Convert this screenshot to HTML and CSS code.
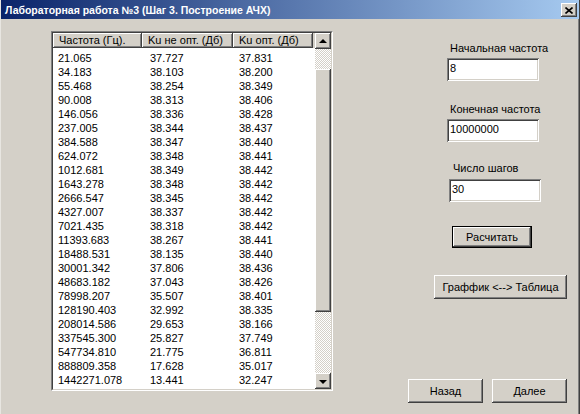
FILE: index.html
```html
<!DOCTYPE html>
<html>
<head>
<meta charset="utf-8">
<link rel="stylesheet" href="styles.css">
</head>
<body>
<div class="window">
  <div class="titlebar">
    <span class="title">Лабораторная работа №3 (Шаг 3. Построение АЧХ)</span>
    <span class="close"><svg width="8" height="7" viewBox="0 0 8 7"><path d="M0.5 0.5 L7.5 6.5 M7.5 0.5 L0.5 6.5" stroke="#000" stroke-width="1.6"/></svg></span>
  </div>
  <div class="client">
    <div class="listbox">
      <div class="listbox-inner">
        <div class="list-main">
          <div class="header">
            <div class="hcell c1">Частота (Гц).</div>
            <div class="hcell c2">Ku не опт. (Дб)</div>
            <div class="hcell c3">Ku опт. (Дб)</div>
          </div>
          <div class="rows">
            <div class="row"><span>21.065</span><span>37.727</span><span>37.831</span></div>
            <div class="row"><span>34.183</span><span>38.103</span><span>38.200</span></div>
            <div class="row"><span>55.468</span><span>38.254</span><span>38.349</span></div>
            <div class="row"><span>90.008</span><span>38.313</span><span>38.406</span></div>
            <div class="row"><span>146.056</span><span>38.336</span><span>38.428</span></div>
            <div class="row"><span>237.005</span><span>38.344</span><span>38.437</span></div>
            <div class="row"><span>384.588</span><span>38.347</span><span>38.440</span></div>
            <div class="row"><span>624.072</span><span>38.348</span><span>38.441</span></div>
            <div class="row"><span>1012.681</span><span>38.349</span><span>38.442</span></div>
            <div class="row"><span>1643.278</span><span>38.348</span><span>38.442</span></div>
            <div class="row"><span>2666.547</span><span>38.345</span><span>38.442</span></div>
            <div class="row"><span>4327.007</span><span>38.337</span><span>38.442</span></div>
            <div class="row"><span>7021.435</span><span>38.318</span><span>38.442</span></div>
            <div class="row"><span>11393.683</span><span>38.267</span><span>38.441</span></div>
            <div class="row"><span>18488.531</span><span>38.135</span><span>38.440</span></div>
            <div class="row"><span>30001.342</span><span>37.806</span><span>38.436</span></div>
            <div class="row"><span>48683.182</span><span>37.043</span><span>38.426</span></div>
            <div class="row"><span>78998.207</span><span>35.507</span><span>38.401</span></div>
            <div class="row"><span>128190.403</span><span>32.992</span><span>38.335</span></div>
            <div class="row"><span>208014.586</span><span>29.653</span><span>38.166</span></div>
            <div class="row"><span>337545.300</span><span>25.827</span><span>37.749</span></div>
            <div class="row"><span>547734.810</span><span>21.775</span><span>36.811</span></div>
            <div class="row"><span>888809.358</span><span>17.628</span><span>35.017</span></div>
            <div class="row"><span>1442271.078</span><span>13.441</span><span>32.247</span></div>
            <div class="row"><span>2340370.485</span><span>9.281</span><span>28.781</span></div>
          </div>
        </div>
        <div class="vscroll">
          <div class="sbtn"><span class="arrow-up"></span></div>
          <div class="track track-top"></div>
          <div class="thumb"></div>
          <div class="track track-bottom"></div>
          <div class="sbtn"><span class="arrow-down"></span></div>
        </div>
      </div>
    </div>
    <div class="side">
      <div class="label l1">Начальная частота</div>
      <div class="field f1">8</div>
      <div class="label l2">Конечная частота</div>
      <div class="field f2">10000000</div>
      <div class="label l3">Число шагов</div>
      <div class="field f3">30</div>
      <div class="btn default b-calc"><span class="btn-face">Расчитать</span></div>
      <div class="btn b-toggle"><span class="btn-face">Граффик &lt;--&gt; Таблица</span></div>
      <div class="bottom-row">
        <div class="btn b-nav"><span class="btn-face">Назад</span></div>
        <div class="btn b-nav"><span class="btn-face">Далее</span></div>
      </div>
    </div>
  </div>
</div>
</body>
</html>
```

FILE: styles.css
```css
* { box-sizing: border-box; }
html, body { margin: 0; padding: 0; background: #d4d0c8; }
body { font-family: "Liberation Sans", Arial, sans-serif; font-size: 11px; color: #000; }

.window {
  width: 580px;
  height: 414px;
  background: #d4d0c8;
  border-left: 1px solid #e8e6e1;
  border-right: 1px solid #404040;
  box-shadow: inset -1px 0 #808080;
  display: flex;
  flex-direction: column;
  overflow: hidden;
}

.titlebar {
  height: 19px;
  flex: none;
  background: linear-gradient(to right, #0a246a, #a6caf0);
  display: flex;
  align-items: center;
  justify-content: space-between;
  padding: 0 2px 0 4px;
}
.title {
  color: #fff;
  font-weight: bold;
  font-size: 10.5px;
  white-space: nowrap;
}
.close {
  width: 16px;
  height: 14px;
  background: #d4d0c8;
  box-shadow: inset -1px -1px #404040, inset 1px 1px #fff, inset -2px -2px #808080;
  display: flex;
  align-items: center;
  justify-content: center;
  margin-top: 1px;
}

.client {
  flex: 1;
  display: flex;
  align-items: flex-start;
}

.listbox {
  margin: 12px 0 0 50px;
  width: 282px;
  height: 360px;
  border: 1px solid;
  border-color: #808080 #fff #fff #808080;
  flex: none;
}
.listbox-inner {
  width: 100%;
  height: 100%;
  border: 1px solid;
  border-color: #404040 #d4d0c8 #d4d0c8 #404040;
  background: #fff;
  display: flex;
  overflow: hidden;
}
.list-main {
  flex: 1;
  overflow: hidden;
}
.header {
  height: 15px;
  display: flex;
  background: #d4d0c8;
}
.hcell {
  height: 15px;
  line-height: 15px;
  padding-left: 6px;
  white-space: nowrap;
  overflow: hidden;
  box-shadow: inset -1px -1px #404040, inset 1px 1px #fff, inset -2px -2px #808080;
}
.c1 { width: 89px; }
.c2 { width: 91px; }
.c3 { width: 80px; }

.rows { padding-top: 3px; }
.row {
  display: grid;
  grid-template-columns: 92px 89px 1fr;
  height: 14px;
  line-height: 14px;
  white-space: nowrap;
}
.row span { padding-left: 5px; }

.vscroll {
  width: 16px;
  flex: none;
  display: flex;
  flex-direction: column;
}
.sbtn {
  height: 16px;
  flex: none;
  background: #d4d0c8;
  box-shadow: inset -1px -1px #404040, inset 1px 1px #fff, inset -2px -2px #808080;
  display: flex;
  align-items: center;
  justify-content: center;
}
.arrow-up, .arrow-down {
  width: 0;
  height: 0;
  border-left: 4px solid transparent;
  border-right: 4px solid transparent;
}
.arrow-up { border-bottom: 4px solid #000; margin-top: -1px; }
.arrow-down { border-top: 4px solid #000; margin-top: 1px; }
.track {
  background: repeating-conic-gradient(#d4d0c8 0 25%, #fff 0 50%) 0 0 / 2px 2px;
}
.track-top { height: 20px; }
.track-bottom { flex: 1; }
.thumb {
  height: 243px;
  flex: none;
  background: #d4d0c8;
  box-shadow: inset -1px -1px #404040, inset 1px 1px #fff, inset -2px -2px #808080;
}

.side {
  flex: 1;
  display: flex;
  flex-direction: column;
  align-items: flex-start;
}
.label {
  height: 13px;
  line-height: 13px;
  white-space: nowrap;
}
.l1 { margin: 23px 0 0 117px; }
.l2 { margin: 22px 0 0 117px; }
.l3 { margin: 20px 0 0 120px; }

.field {
  width: 92px;
  height: 23px;
  background: #fff;
  padding: 3px 3px 0;
  line-height: 14px;
  box-shadow: inset 1px 1px #808080, inset -1px -1px #fff, inset 2px 2px #404040, inset -2px -2px #d4d0c8;
}
.f1 { margin: 3px 0 0 114px; }
.f2 { margin: 3px 0 0 114px; }
.f3 { margin: 4px 0 0 116px; }

.btn {
  display: flex;
  background: #d4d0c8;
}
.btn-face {
  flex: 1;
  display: flex;
  align-items: center;
  justify-content: center;
  white-space: nowrap;
  box-shadow: inset -1px -1px #404040, inset 1px 1px #fff, inset -2px -2px #808080;
}
.default { border: 1px solid #000; }
.b-calc { width: 80px; height: 22px; margin: 24px 0 0 119px; }
.b-toggle { width: 133px; height: 24px; margin: 27px 0 0 101px; }
.bottom-row {
  display: flex;
  gap: 9px;
  margin: 80px 0 0 75px;
}
.b-nav { width: 75px; height: 24px; }
```
